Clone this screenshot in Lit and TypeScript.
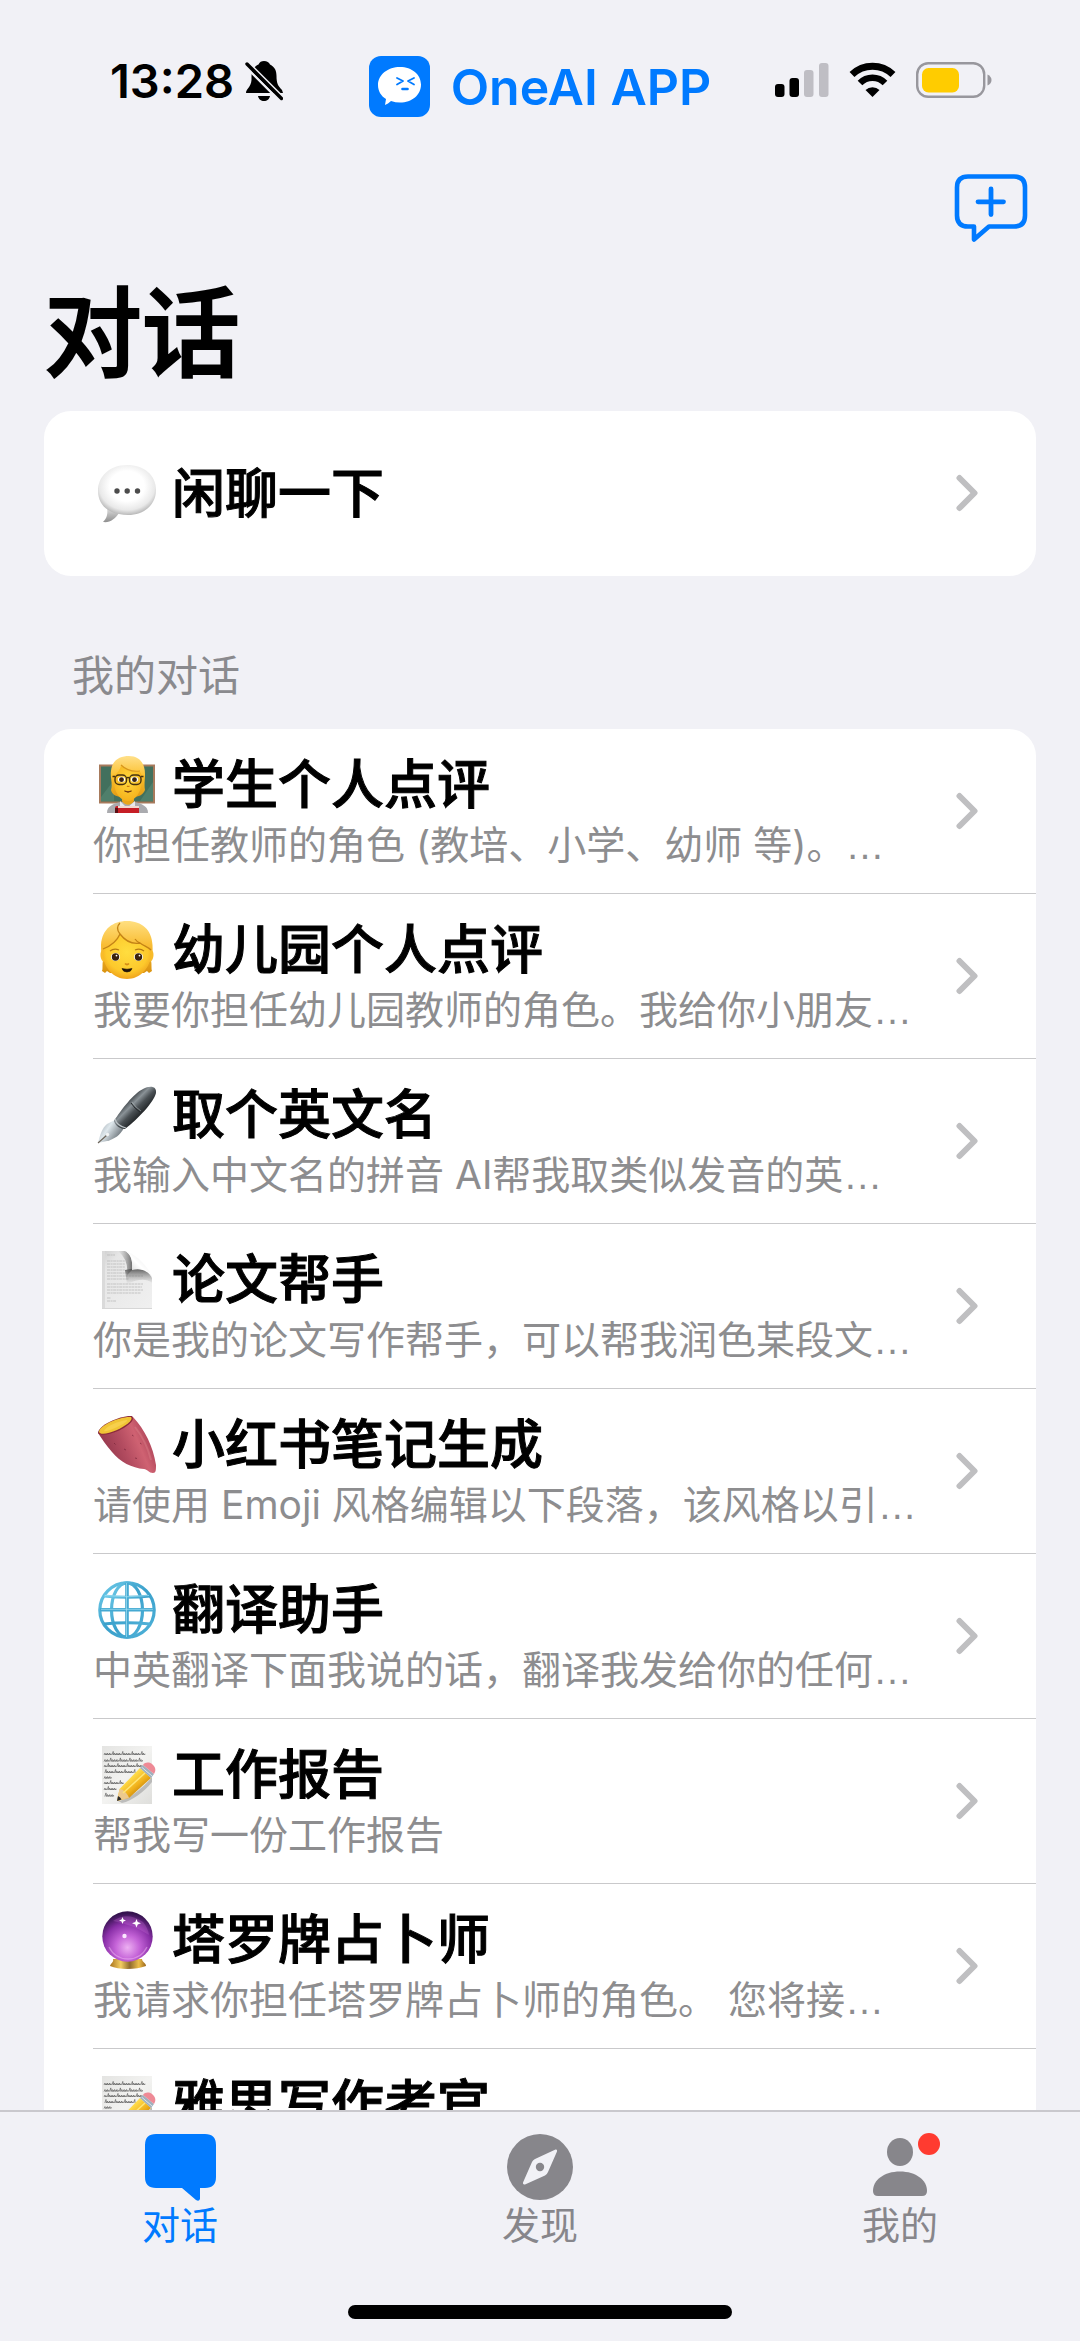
import { LitElement, html, svg, css, nothing } from "lit";
import { customElement, property } from "lit/decorators.js";

type Chat = { icon: string; title: string; note?: string; more?: boolean };

const notes: Chat[] = [
  { icon: "teacher", title: "学生个人点评", note: "你担任教师的角色 (教培、小学、幼师 等)。", more: true },
  { icon: "child", title: "幼儿园个人点评", note: "我要你担任幼儿园教师的角色。我给你小朋友", more: true },
  { icon: "pen", title: "取个英文名", note: "我输入中文名的拼音 AI帮我取类似发音的英", more: true },
  { icon: "page", title: "论文帮手", note: "你是我的论文写作帮手，可以帮我润色某段文", more: true },
  { icon: "potato", title: "小红书笔记生成", note: "请使用 Emoji 风格编辑以下段落，该风格以引", more: true },
  { icon: "globe", title: "翻译助手", note: "中英翻译下面我说的话，翻译我发给你的任何", more: true },
  { icon: "memo", title: "工作报告", note: "帮我写一份工作报告" },
  { icon: "crystal", title: "塔罗牌占卜师", note: "我请求你担任塔罗牌占卜师的角色。 您将接", more: true },
  { icon: "memo", title: "雅思写作考官", note: "" },
];

/* Scribbled handwriting lines of the memo sheet. */
const scribble = [9, 15.5, 21, 27, 32.5, 38, 44, 50.5].map((y, i) => {
  const end = [46, 43, 42, 36, 11, 24, 18, 15][i];
  let d = `M6 ${y}`;
  for (let x = 6, n = i; x < end; x += 2.4, n++) {
    d += n % 4 === 3 ? "m.8 0l1.2 -3.6l.4 3.6" : "l1 -2l.4 2l1 -1.2v1.2";
  }
  return svg`<path d=${d} fill="none" stroke="#555" stroke-width=".6"/>`;
});

const pageLines = [4, 10, 13, 16, 19, 22, 25, 28, 33, 36, 39, 42, 47, 50].map((y, i) => {
  const end = [17, 27, 27, 27, 27, 29, 45, 31, 45, 44, 45, 43, 13, 18][i];
  return svg`<path d=${`M9 ${y}H${end}`} stroke="#b9b9b9" stroke-width=".8" stroke-dasharray="3 .6 2 .5"/>`;
});

const pictures: Record<string, unknown> = {
  bubble: svg`
    <defs>
      <radialGradient id="b" cx=".5" cy=".42" r=".6">
        <stop offset=".5" stop-color="#fff"/><stop offset=".8" stop-color="#e9e9e9"/><stop offset="1" stop-color="#b0b0b0"/>
      </radialGradient>
      <linearGradient id="bt" x1="0" y1="0" x2="0" y2="1"><stop offset="0" stop-color="#e0e0e0"/><stop offset="1" stop-color="#8f8f8f"/></linearGradient>
    </defs>
    <path d="M9 43C10 49 9 53 5 57C12 58 17 54 21 48Z" fill="url(#bt)"/>
    <path d="M29 0C46 0 58 10 58 25C58 40 46 50 30 50C27 50 24 49.500 21 49C8 47 0 38 0 26C0 11 12 0 29 0Z" fill="url(#b)"/>
    <g fill="#4c4c4c"><circle cx="19" cy="26" r="2.700"/><circle cx="29.200" cy="26" r="2.700"/><circle cx="39.500" cy="26" r="2.700"/></g>`,
  teacher: svg`
    <defs>
      <linearGradient id="h" x1="0" y1="0" x2="0" y2="1"><stop offset="0" stop-color="#ffe08a"/><stop offset=".5" stop-color="#fbc02d"/><stop offset="1" stop-color="#e09a16"/></linearGradient>
      <radialGradient id="f" cx=".5" cy=".4" r=".6"><stop offset="0" stop-color="#ffd93d"/><stop offset="1" stop-color="#f5b11c"/></radialGradient>
    </defs>
    <rect x="1" y="8.500" width="56" height="39" fill="#a77a5c"/>
    <rect x="3" y="10.500" width="52" height="35" fill="#42705d"/>
    <path d="M3 41L16 24V45H3ZM42 45L55 26V45Z" fill="#4f7f6b"/>
    <path d="M9 57C9 50 15 48 22 46H37C44 48 50 50 50 57Z" fill="#aaabaf"/>
    <path d="M22 45L29 52L37 45V57H22Z" fill="#e9e9ec"/>
    <path d="M24 37H36V45C33 50 27 50 24 45Z" fill="#e9a51b"/>
    <path d="M13 15C14 4 22 0 31 0C42 0 47 8 47 18C47 24 46 29 47 34C45 39 40 41 36 41H22C17 40 14 38 13 34C15 28 12 22 13 15Z" fill="url(#h)"/>
    <path d="M16 20C19 17 22 14 23 10C30 15 36 17 42 16C44 18 44 22 44 25C43 37 37 45 30 45C22 45 16 36 16 25Z" fill="url(#f)"/>
    <path d="M23 9C28 14 34 16 42 15" fill="none" stroke="#d7951b" stroke-width="1.200"/>
    <g fill="#fff"><ellipse cx="23.500" cy="23.500" rx="3.600" ry="2.800"/><ellipse cx="36.500" cy="23.500" rx="3.600" ry="2.800"/></g>
    <g fill="#392313"><circle cx="23.500" cy="23.700" r="2.400"/><circle cx="36.500" cy="23.700" r="2.400"/></g>
    <g fill="none" stroke="#463211" stroke-width="1.400"><rect x="17" y="19" width="11.500" height="9.500" rx="4"/><rect x="31.500" y="19" width="11.500" height="9.500" rx="4"/><path d="M28.500 22Q30 21 31.500 22M14.500 20.500H17M43 20.500H45.500"/></g>
    <path d="M29 30Q30 31 31.500 30" stroke="#c97b11" stroke-width="1.200" fill="none"/>
    <path d="M26.500 35Q30 36.500 33.500 35Q30 37.500 26.500 35Z" fill="#6a3210" stroke="#6a3210" stroke-width=".8"/>
    <path d="M17 52Q17 50 19 50H41V57H17Z" fill="#c61e26"/><path d="M17 52H20V57H17Z" fill="#5c0e14"/><path d="M20 50H41V52H20Z" fill="#f2d9cf"/>`,
  child: svg`
    <defs>
      <linearGradient id="h" x1="0" y1="0" x2="0" y2="1"><stop offset="0" stop-color="#ffdf80"/><stop offset=".45" stop-color="#f9be36"/><stop offset="1" stop-color="#d9920f"/></linearGradient>
      <radialGradient id="f" cx=".5" cy=".4" r=".62"><stop offset="0" stop-color="#ffdd3f"/><stop offset=".7" stop-color="#fdc92c"/><stop offset="1" stop-color="#ee9f1a"/></radialGradient>
    </defs>
    <path d="M3 24C4 8 15 0 29 0C44 0 54 9 54.500 24C55 30 54 34 53 39C54 44 53 48 54 50L51 52L49 50L46 52H12L9 50L7 52L4 50C5 48 4 44 5 39C3.500 34 3 30 3 24Z" fill="url(#h)"/>
    <path d="M5.500 29C1 28 1.500 41 7 41ZM52.500 29C57 28 56.500 41 51 41Z" fill="#f8bb2b"/>
    <path d="M5 28C13 25 19 20 22 13C29 21 37 23 42 22C47 25 52 28 53 32C53 47 42 58 29 58C16 58 5 47 5 32Z" fill="url(#f)"/>
    <path d="M22 2Q17 7 22 13C28 21 36 23 42 22C46 25 50 26 53 29M22 13C19 20 13 25 5 28M37 18Q39 21 42 22" fill="none" stroke="#c48316" stroke-width="1.300"/>
    <g fill="none" stroke="#b77b14" stroke-width="1.300"><path d="M12 30Q16 27 21 29M37 29Q42 27 46 30"/></g>
    <g fill="#fff"><ellipse cx="17.500" cy="36" rx="4.600" ry="4"/><ellipse cx="40.500" cy="36" rx="4.600" ry="4"/></g>
    <g fill="#3a220d"><circle cx="17.500" cy="36" r="3.700"/><circle cx="40.500" cy="36" r="3.700"/></g>
    <g fill="#fff"><circle cx="18.500" cy="34.600" r=".9"/><circle cx="41.500" cy="34.600" r=".9"/></g>
    <path d="M27 42.500Q29 44.500 31 42.500" stroke="#d58b15" stroke-width="1.700" fill="none"/>
    <path d="M24 47.500Q29 49 34 47.500Q33 51 29 51Q25 51 24 47.500Z" fill="#1f1209" stroke="#1f1209" stroke-width=".6"/>`,
  pen: svg`
    <defs>
      <linearGradient id="p" x1=".25" y1=".25" x2=".75" y2=".75"><stop offset=".1" stop-color="#2b3034"/><stop offset=".36" stop-color="#8a9297"/><stop offset=".55" stop-color="#4a5054"/><stop offset=".9" stop-color="#131618"/></linearGradient>
      <linearGradient id="n" x1="0" y1="0" x2="1" y2=".6"><stop offset="0" stop-color="#8a949b"/><stop offset=".45" stop-color="#dfe8ed"/><stop offset="1" stop-color="#5f676d"/></linearGradient>
    </defs>
    <path d="M0 57C2 49 4 42 9 38L17 34L26 42C22 49 17 53 9 55Z" fill="url(#n)"/>
    <path d="M0 57L9 49" stroke="#6d6459" stroke-width="1.200"/><circle cx="9.500" cy="48.500" r="1.700" fill="#f2f4f4"/>
    <path d="M16 35C23 24 36 7 45 3C52 -1 59 0 58 7C56 16 40 33 27 43C23 43 17 40 16 35Z" fill="url(#p)"/>
    <path d="M33 17Q37 23 42 26" stroke="#23272a" stroke-width="1" fill="none"/>
    <path d="M34 16Q38 22 43 25" stroke="#a9b0b4" stroke-width=".6" fill="none"/>
    <path d="M17 33Q19 40 28 42" stroke="#bcc3c7" stroke-width="1.200" fill="none"/>`,
  page: svg`
    <defs>
      <linearGradient id="s" x1="0" y1="0" x2="1" y2="1"><stop offset="0" stop-color="#cfcfcf"/><stop offset=".2" stop-color="#e6e6e6"/><stop offset="1" stop-color="#f0f0f0"/></linearGradient>
      <linearGradient id="c" x1="0" y1="1" x2="1" y2="0"><stop offset=".1" stop-color="#c9c9c9"/><stop offset=".5" stop-color="#fff"/><stop offset="1" stop-color="#dcdcdc"/></linearGradient>
      <linearGradient id="d" x1="0" y1="0" x2="0" y2="1"><stop offset="0" stop-color="#3d3d3d"/><stop offset="1" stop-color="#8d8d8d" stop-opacity="0"/></linearGradient>
      <linearGradient id="e" x1="1" y1="0" x2="0" y2="0"><stop offset="0" stop-color="#4d4d4d"/><stop offset="1" stop-color="#8d8d8d" stop-opacity="0"/></linearGradient>
    </defs>
    <path d="M4 0H27C33 3 35 9 34 19C44 17 52 20 54 27V58H4Z" fill="url(#s)"/>
    <path d="M4 0H7V58H4Z" fill="#dadada"/>
    ${pageLines}
    <path d="M27 19C42 16 52 19 54 27V32C48 27 40 28 29 33Z" fill="url(#d)" opacity=".8"/>
    <path d="M20 0H27C33 3 35 10 34 19L29 24Q31 9 20 0Z" fill="url(#e)" opacity=".8"/>
    <path d="M27 0C36 2 51 15 54 27C50 19 42 17 34 19C35 9 33 3 27 0Z" fill="url(#c)"/>
    <path d="M4 57.500H54" stroke="#d6d6d6" stroke-width="1"/>`,
  potato: svg`
    <defs>
      <linearGradient id="r" x1="0" y1=".6" x2="1" y2=".2"><stop offset="0" stop-color="#8c3248"/><stop offset=".4" stop-color="#b34c60"/><stop offset=".65" stop-color="#cf6272"/><stop offset="1" stop-color="#9a3148"/></linearGradient>
    </defs>
    <path d="M0 17C8 12 28 2 35 1C47 14 55 30 58 49C58 54 58 57 55 57C51 57 49 53 46 53C34 52 22 46 14 36C8 29 4 23 0 17Z" fill="url(#r)"/>
    <path d="M0 17C0 9 23 -1 34 0C38 4 29 11 20 15C11 19 2 20 0 17Z" fill="#8b2b3c"/>
    <path d="M1 16C1 9 23 0 33 1C36 4 27 10 19 14C10 18 2 19 1 16Z" fill="#f0c435"/>
    <path d="M6 15C8 10 21 5 29 4C30 6 23 9 17 12C12 14 7 16 6 15Z" fill="#f7d04c"/>
    <g stroke="#702035" stroke-width="1" opacity=".6"><path d="M34 19L35.500 20M42 27L43.500 28M26 33L28 34M37 42L39 42.500M16 27L17.500 28.500"/></g>
    <path d="M37 11C45 21 50 32 53 44" stroke="#e28b92" stroke-width="2" fill="none" opacity=".35"/>`,
  globe: svg`
    <defs><linearGradient id="g" x1="0" y1="0" x2="1" y2="1"><stop offset="0" stop-color="#6fcbe9"/><stop offset=".5" stop-color="#3aa0cb"/><stop offset="1" stop-color="#4fb1d8"/></linearGradient></defs>
    <circle cx="29" cy="29" r="27.500" fill="#fff"/>
    <g fill="none" stroke="url(#g)" stroke-width="3.200">
      <circle cx="29" cy="29" r="27.200"/><ellipse cx="29" cy="29" rx="15.500" ry="27.200"/>
      <path d="M6 15Q29 17.500 52 15M6 43Q29 40.500 52 43"/>
    </g>
    <path d="M2 27H56V30.500H2ZM27.200 2H30.800V56H27.200Z" fill="#45a9d2"/>
    <path d="M28.500 2V56M3 28.300H55M7 14.500Q29 17 51 14.500" stroke="#a5e2f3" stroke-width=".7" fill="none"/>`,
  memo: svg`
    <defs>
      <linearGradient id="m" x1="0" y1="0" x2="1" y2="1"><stop offset="0" stop-color="#e4e4e2"/><stop offset=".5" stop-color="#f3f3f1"/><stop offset="1" stop-color="#dededb"/></linearGradient>
      <linearGradient id="y" x1=".3" y1=".3" x2=".7" y2=".75"><stop offset=".1" stop-color="#ffdc4a"/><stop offset=".6" stop-color="#f0b01a"/><stop offset="1" stop-color="#c0800d"/></linearGradient>
    </defs>
    <rect x="4" y="0" width="50" height="58" fill="url(#m)"/>
    ${scribble}
    <path d="M20 55C31 54 48 39 54 31V36C46 46 34 55 24 57Z" fill="#777" opacity=".4"/>
    <path d="M19 55L21.500 43L42 22L53 32L31 52Z" fill="url(#y)"/>
    <path d="M19 55L21.500 43C25 43 30 48 31 52Z" fill="#ecc98e"/>
    <path d="M19 55L20 50Q22.500 51 23.500 53.500Z" fill="#2b2b2b"/>
    <path d="M25 47L47 27" stroke="#ffe677" stroke-width="1.500"/>
    <path d="M42 22L45 19L56 28L53 32Z" fill="#9fb0bd"/><path d="M43.500 21L54 30" stroke="#dbe4ea" stroke-width="1"/>
    <path d="M45 19C47 16 51 16 54 18C58 21 58 25 56 28Z" fill="#ee8a96"/>`,
  crystal: svg`
    <defs>
      <radialGradient id="o" cx=".5" cy=".72" r=".68"><stop offset="0" stop-color="#edb0f2"/><stop offset=".35" stop-color="#c564d8"/><stop offset=".7" stop-color="#8a2fa8"/><stop offset="1" stop-color="#35134f"/></radialGradient>
      <linearGradient id="k" x1="0" y1="0" x2="1" y2="0"><stop offset="0" stop-color="#a9731d"/><stop offset=".3" stop-color="#f3ce62"/><stop offset=".55" stop-color="#8f6a2d"/><stop offset=".8" stop-color="#edbf4a"/><stop offset="1" stop-color="#9b661b"/></linearGradient>
    </defs>
    <path d="M15 48H44C44 51 48 52 48 55Q40 58 29.500 58Q19 58 12 55C13 52 16 51 15 48Z" fill="url(#k)"/>
    <circle cx="29.500" cy="25.500" r="25.200" fill="url(#o)"/>
    <path d="M15 10Q29 0 45 11Q50 17 51 24Q36 14 15 10Z" fill="#d37ae0" opacity=".25"/>
    <path d="M24.500 6L25.500 8.500L28 9.500L25.500 10.500L24.500 13L23.500 10.500L21 9.500L23.500 8.500ZM38.500 8L39.700 11L43 12.200L39.700 13.400L38.500 16.500L37.300 13.400L34 12.200L37.300 11Z" fill="#fff"/>
    <circle cx="26.500" cy="25" r="2.200" fill="#fbe6ff"/>
    <path d="M11 36Q17 48 30 48T49 36" stroke="#efb5f4" stroke-width="1.300" fill="none" opacity=".5"/>`,
};

@customElement("chat-row")
export class ChatRow extends LitElement {
  @property({ attribute: false }) chat!: Chat;

  static styles = css`
    :host { display: block; }
    .row {
      display: flex;
      align-items: center;
      min-height: 164px;
      padding: 0 58px 0 49px;
      box-sizing: border-box;
      color: inherit;
      text-decoration: none;
    }
    .body { flex: 1; min-width: 0; display: grid; gap: 6px; padding-top: 2px; }
    .head { display: flex; align-items: center; gap: 16px; padding-left: 5px; }
    .picture { flex: none; width: 58px; height: 58px; overflow: visible; }
    .title {
      font-size: 53px;
      line-height: 60px;
      font-weight: 500;
      color: #000;
      white-space: nowrap;
      -webkit-text-stroke: 1px currentColor;
    }
    .note { min-height: 48px; font-size: 39px; line-height: 48px; font-weight: 400; color: #8d8d8f; white-space: nowrap; }
    .more { font-family: "Liberation Sans", sans-serif; }
    .chevron { flex: none; width: 22px; height: 38px; }
  `;

  render() {
    const { icon, title, note, more } = this.chat;
    return html`
      <a class="row" href="#chat">
        <span class="body">
          <span class="head">
            <svg class="picture" viewBox="0 0 58 58" aria-hidden="true">${pictures[icon]}</svg>
            <span class="title">${title}</span>
          </span>
          ${note === undefined
            ? nothing
            : html`<span class="note">${note}${more ? html`<span class="more">…</span>` : nothing}</span>`}
        </span>
        <svg class="chevron" viewBox="0 0 22 38" aria-hidden="true">
          <path d="M3.500 4L18.500 19L3.500 34" fill="none" stroke="#bfbfc1" stroke-width="6" stroke-linecap="round" stroke-linejoin="round"/>
        </svg>
      </a>`;
  }
}

@customElement("app-root")
export class AppRoot extends LitElement {
  static styles = css`
    :host {
      display: flex;
      flex-direction: column;
      height: 100vh;
      background: #f1f1f6;
      color: #000;
      font-family: Inter, "Noto Sans CJK SC", sans-serif;
    }
    .status {
      flex: none;
      display: grid;
      grid-template-columns: 1fr auto 1fr;
      align-items: center;
      height: 160px;
      padding: 0 88px 0 110px;
    }
    .clock { display: flex; align-items: center; gap: 11px; padding-top: 2px; }
    .time { font-size: 47px; line-height: 54px; font-weight: 600; }
    .bell { width: 38px; height: 42px; }
    .brand {
      display: flex;
      align-items: center;
      gap: 21px;
      padding-top: 13px;
      margin-right: 22px;
      color: #007aff;
      font-size: 50px;
      line-height: 60px;
      font-weight: 600;
      text-decoration: none;
    }
    .logo { width: 61px; height: 61px; }
    .signals { display: flex; align-items: center; justify-content: flex-end; gap: 20px; }
    .bars { width: 54px; height: 36px; }
    .wifi { width: 47px; height: 36px; }
    .battery { width: 76px; height: 36px; }
    .toolbar { flex: none; display: flex; justify-content: flex-end; padding: 13px 52px 0; }
    .compose { border: 0; padding: 0; background: none; display: flex; cursor: pointer; }
    .compose svg { width: 74px; height: 69px; }
    .page { flex: 1; min-height: 0; overflow: hidden auto; scrollbar-width: none; padding: 0 44px; }
    .heading {
      margin: 22px 0 7px;
      font-size: 98px;
      line-height: 140px;
      font-weight: 500;
      -webkit-text-stroke: 2px currentColor;
    }
    .card { margin: 0; padding: 0; list-style: none; background: #fff; border-radius: 27px; }
    .item { padding-bottom: 1px; }
    .card .item:not(:last-child) {
      background: linear-gradient(#c9c9cb, #c9c9cb) 49px 100% / 100% 1px no-repeat;
    }
    .section { margin: 70px 0 23px; padding-left: 28px; font-size: 42px; line-height: 60px; font-weight: 400; color: #8a8a8e; }
    .tabs {
      flex: none;
      display: grid;
      grid-template-columns: repeat(3, 1fr);
      padding-top: 22px;
      border-top: 2px solid #c9c8cd;
    }
    .tab { display: grid; justify-items: center; color: #87868b; text-decoration: none; font-size: 38px; line-height: 46px; }
    .tab.active { color: #007aff; }
    .tab svg { width: 80px; height: 68px; overflow: visible; }
    .home { flex: none; padding: 57px 0 22px; display: flex; justify-content: center; }
    .grip { width: 384px; height: 14px; border-radius: 7px; background: #000; }
  `;

  render() {
    return html`
      <header class="status">
        <div class="clock">
          <span class="time">13:28</span>
          <svg class="bell" viewBox="0 0 38 42" aria-hidden="true">
            <path d="M19 1C22 1 24 2.500 25 4.500C30 7 31.500 11 31.500 16C31.500 23 33 26 37 30L38 33H1C1 29 6 27 6.500 20C6.700 16 6 11 9 8C10.500 6 12 5 13.500 4.500C14.500 2 16.500 1 19 1Z" fill="#000"/>
            <path d="M13 36H25C24.500 39 22 41 19 41S13.500 39 13 36Z" fill="#000"/>
            <path d="M4 3.500L39 38.500" stroke="#f1f1f6" stroke-width="3"/>
            <path d="M0 6L33 39M-2 4L4 10" stroke="#f1f1f6" stroke-width="2.500"/>
            <path d="M4 12V2H10Z" fill="#f1f1f6"/>
            <path d="M2 4L36.500 38.500" stroke="#000" stroke-width="3.400" stroke-linecap="round"/>
          </svg>
        </div>
        <a class="brand" href="#oneai">
          <svg class="logo" viewBox="0 0 61 61" aria-hidden="true">
            <rect width="61" height="61" rx="12" fill="#007aff"/>
            <path d="M31 11C43 11 52 18.500 52 28.500C52 39 43 46.500 31 46.500C28 46.500 25 46 22 45C20 47 18 48 16 49L17 43C12 40 9 35 9 29C9 18.500 19 11 31 11Z" fill="#fff"/>
            <g fill="none" stroke="#007aff" stroke-width="1.800" stroke-linecap="round" stroke-linejoin="round"><path d="M28 22L34 25L28 28.500M45 22L39 25L45 28.500"/></g>
            <path d="M33.500 33H38.500" stroke="#007aff" stroke-width="2.600" stroke-linecap="round"/>
          </svg>
          <span>OneAI APP</span>
        </a>
        <div class="signals">
          <svg class="bars" viewBox="0 0 54 36" aria-hidden="true">
            <rect x="0" y="22" width="9.500" height="13" rx="3"/><rect x="14.500" y="16" width="9.500" height="19" rx="3"/>
            <g fill="#bfbec4"><rect x="29" y="8" width="9.500" height="27" rx="3"/><rect x="44" y="1" width="9.500" height="34" rx="3"/></g>
          </svg>
          <svg class="wifi" viewBox="0 0 47 36" aria-hidden="true">
            <g fill="none" stroke="#000" stroke-width="7"><path d="M3 12.500A29.500 29.500 0 0 1 44 12.500"/><path d="M11 21A17.500 17.500 0 0 1 36 21" stroke-width="6.500"/></g>
            <path d="M23.500 35L16.500 28A10 10 0 0 1 30.500 28Z"/>
          </svg>
          <svg class="battery" viewBox="0 0 76 36" aria-hidden="true">
            <rect x="1.200" y="1.200" width="67" height="33.600" rx="11" fill="none" stroke="#98979d" stroke-width="2.400"/>
            <rect x="6" y="6" width="37" height="24.500" rx="6.500" fill="#ffcc00"/>
            <path d="M71.500 12.500Q75.500 14.500 75.500 18T71.500 23.500Z" fill="#98979d"/>
          </svg>
        </div>
      </header>
      <div class="toolbar">
        <button class="compose" aria-label="新对话">
          <svg viewBox="0 0 74 69" aria-hidden="true">
            <g fill="none" stroke="#007aff" stroke-linecap="round" stroke-linejoin="round">
              <path d="M14 3.500H60Q71 3.500 71 14.500V42.500Q71 53.500 60 53.500H35L20 66.500V53.500H14Q3 53.500 3 42.500V14.500Q3 3.500 14 3.500Z" stroke-width="4.600"/>
              <path d="M37 16V41.500M24 28.800H49.500" stroke-width="4.800"/>
            </g>
          </svg>
        </button>
      </div>
      <main class="page">
        <h1 class="heading">对话</h1>
        <ul class="card">
          <li class="item"><chat-row .chat=${{ icon: "bubble", title: "闲聊一下" }}></chat-row></li>
        </ul>
        <h2 class="section">我的对话</h2>
        <ul class="card">
          ${notes.map((chat) => html`<li class="item"><chat-row .chat=${chat}></chat-row></li>`)}
        </ul>
      </main>
      <nav class="tabs">
        <a class="tab active" href="#chats" aria-current="page">
          <svg viewBox="0 0 80 68" aria-hidden="true">
            <path d="M16 0H65Q76 0 76 11V43Q76 54 65 54H60V65Q59 68 56 66L42 54H16Q5 54 5 43V11Q5 0 16 0Z" fill="#007aff"/>
          </svg>
          <span>对话</span>
        </a>
        <a class="tab" href="#discover">
          <svg viewBox="0 0 80 68" aria-hidden="true">
            <circle cx="40" cy="33" r="33" fill="#87868b"/>
            <path d="M55.500 15.500Q57.500 15 57 17.500L48 38Q47 40.500 45 41.500L25 50.500Q22.500 51 23 48.500L32 28Q33 26 35 25Z" fill="#f1f1f6"/>
            <circle cx="40" cy="33" r="4.200" fill="#87868b"/>
          </svg>
          <span>发现</span>
        </a>
        <a class="tab" href="#mine">
          <svg viewBox="0 0 80 68" aria-hidden="true">
            <ellipse cx="40" cy="18" rx="13" ry="14" fill="#87868b"/>
            <path d="M13 57C13 46 24 37.500 40 37.500S67 46 67 57Q67 62 62 62H18Q13 62 13 57Z" fill="#87868b"/>
            <circle cx="69" cy="10" r="11" fill="#ff3b30"/>
          </svg>
          <span>我的</span>
        </a>
      </nav>
      <div class="home"><div class="grip"></div></div>
    `;
  }
}
